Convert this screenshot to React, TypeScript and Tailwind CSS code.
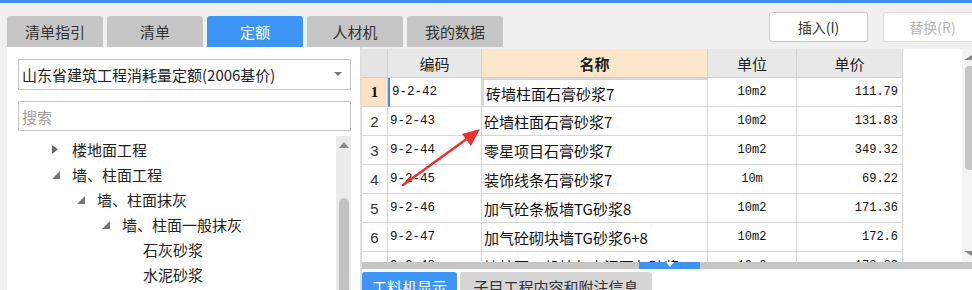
import React from 'react';

const tabs = ['清单指引', '清单', '定额', '人材机', '我的数据'];

const rows = [
  { code: '9-2-42', name: '砖墙柱面石膏砂浆7', unit: '10m2', price: '111.79' },
  { code: '9-2-43', name: '砼墙柱面石膏砂浆7', unit: '10m2', price: '131.83' },
  { code: '9-2-44', name: '零星项目石膏砂浆7', unit: '10m2', price: '349.32' },
  { code: '9-2-45', name: '装饰线条石膏砂浆7', unit: '10m', price: '69.22' },
  { code: '9-2-46', name: '加气砼条板墙TG砂浆8', unit: '10m2', price: '171.36' },
  { code: '9-2-47', name: '加气砼砌块墙TG砂浆6+8', unit: '10m2', price: '172.6' },
  { code: '9-2-48', name: '墙柱面一般抹灰水泥石灰砂浆1:1:6', unit: '10m2', price: '173.38' },
];

const tree = [
  { label: '楼地面工程', indent: 0, arrow: 'closed' },
  { label: '墙、柱面工程', indent: 0, arrow: 'open' },
  { label: '墙、柱面抹灰', indent: 1, arrow: 'open' },
  { label: '墙、柱面一般抹灰', indent: 2, arrow: 'open' },
  { label: '石灰砂浆', indent: 3, arrow: 'none' },
  { label: '水泥砂浆', indent: 3, arrow: 'none' },
];

const indentCls = ['pl-[34px]', 'pl-[59px]', 'pl-[84px]', 'pl-[109px]'];

const App: React.FC = () => {
  return (
    <div className="w-[972px] h-[290px] overflow-hidden bg-[#f0f0f0] flex flex-col relative font-['Noto_Sans_CJK_SC',sans-serif] text-[#333]">
      {/* top accent */}
      <div className="h-[3px] bg-[#3b8ff2] shrink-0" />

      {/* tab row + buttons */}
      <div className="h-[44px] flex justify-between shrink-0">
        <div className="flex items-end gap-[4px] pl-[7px]">
          {tabs.map((t) => (
            <div
              key={t}
              className={
                'w-[96px] h-[31px] rounded-t-[3px] flex items-center justify-center text-[15px] leading-none ' +
                (t === '定额' ? 'bg-[#3d96f6] text-white' : 'bg-[#c6c6c6] text-[#333]')
              }
            >
              {t}
            </div>
          ))}
        </div>
        <div className="flex gap-[15px] pt-[9px]">
          <button className="w-[99px] h-[30px] bg-white border border-[#c9c9c9] rounded-[3px] text-[14px] text-[#333] leading-none">
            插入(I)
          </button>
          <button className="w-[99px] h-[30px] bg-white border border-[#dedede] rounded-[3px] text-[14px] text-[#b5b5b5] leading-none mr-[-10px]">
            替换(R)
          </button>
        </div>
      </div>

      {/* body */}
      <div className="flex flex-1 min-h-0">
        {/* left panel */}
        <div className="ml-[7px] w-[353px] bg-white flex flex-col pt-[12px] pl-[11px] pr-[9px] shrink-0">
          <div className="h-[31px] shrink-0 border border-[#c4c4c4] flex items-center justify-between pl-[3px] pr-[8px] text-[15px] text-[#222] leading-none">
            <span>山东省建筑工程消耗量定额(2006基价)</span>
            <svg width="8" height="5" viewBox="0 0 8 5">
              <polygon points="0,0 8,0 4,4" fill="#777" />
            </svg>
          </div>
          <div className="mt-[11px] h-[30px] shrink-0 border border-[#c4c4c4] flex items-center pl-[3px] text-[15px] text-[#a0a0a0] leading-none">
            搜索
          </div>
          <div className="mt-[5px] flex flex-1 min-h-0">
            <div className="flex-1 pt-[1px]">
              {tree.map((n) => (
                <div key={n.label} className={'h-[25px] flex items-center text-[15px] text-[#222] leading-none ' + indentCls[n.indent]}>
                  <span className="w-[20px] flex items-center">
                    {n.arrow === 'closed' && (
                      <svg width="6" height="9" viewBox="0 0 6 9">
                        <polygon points="0,0 6,4.5 0,9" fill="#666" />
                      </svg>
                    )}
                    {n.arrow === 'open' && (
                      <svg width="8" height="8" viewBox="0 0 8 8">
                        <polygon points="8,0 8,8 0,8" fill="#777" />
                      </svg>
                    )}
                  </span>
                  <span className={n.arrow === 'none' ? '-ml-[4px]' : ''}>{n.label}</span>
                </div>
              ))}
            </div>
            {/* tree scrollbar */}
            <div className="w-[15px] bg-[#ececec] flex flex-col items-center pt-[6px]">
              <svg width="10" height="6" viewBox="0 0 10 6">
                <polygon points="5,0 10,6 0,6" fill="#8a8a8a" />
              </svg>
              <div className="mt-[50px] w-[10px] flex-1 bg-[#c2c2c2] rounded-t-[5px]" />
            </div>
          </div>
        </div>

        {/* splitter */}
        <div className="w-[2px] bg-[#dedede] shrink-0" />

        {/* right area */}
        <div className="flex-1 flex flex-col min-w-0 pt-[2px]">
          <div className="h-[213px] shrink-0 flex bg-white overflow-hidden">
            {/* table */}
            <div className="w-[541px] flex flex-col">
              <div className="grid grid-cols-[26px_94px_226px_89px_106px] h-[29px] shrink-0 text-[15px] leading-none">
                <div className="bg-[#e4e4e4] border-r border-b border-[#d2d2d2]" />
                <div className="bg-[#e8e8e8] border-r border-b border-[#d2d2d2] flex items-center justify-center text-[#222]">编码</div>
                <div className="bg-[#fde7cb] border-r border-b border-[#d2d2d2] flex items-center justify-center font-bold text-[#222]">名称</div>
                <div className="bg-[#e8e8e8] border-r border-b border-[#d2d2d2] flex items-center justify-center text-[#222]">单位</div>
                <div className="bg-[#e8e8e8] border-r border-b border-[#d2d2d2] flex items-center justify-center text-[#222]">单价</div>
              </div>
              {rows.map((r, i) => {
                const first = i === 0;
                return (
                  <div key={r.code} className="grid grid-cols-[26px_94px_226px_89px_106px] h-[29px] shrink-0 leading-none text-[#111]">
                    <div
                      className={
                        'border-r border-b border-[#d6d6d6] flex items-center justify-center ' +
                        (first
                          ? "bg-[#fde3c4] font-bold font-['Liberation_Serif',serif] text-[15px]"
                          : "bg-white font-['Liberation_Sans',sans-serif] text-[15px] text-[#333]")
                      }
                    >
                      {i + 1}
                    </div>
                    <div
                      className={
                        "border-r border-b border-[#d6d6d6] flex items-center pl-[2px] font-['Liberation_Mono',monospace] text-[12.5px] " +
                        (first ? 'border-l-2 border-l-[#3d8ef5] pl-0' : '')
                      }
                    >
                      {r.code}
                    </div>
                    <div
                      className={
                        'border-r border-b border-[#d6d6d6] flex items-center pl-[2px] text-[15px] whitespace-nowrap overflow-hidden ' +
                        (first ? 'border-2 border-[#6e6e6e] pl-0' : '')
                      }
                    >
                      {r.name}
                    </div>
                    <div className="border-r border-b border-[#d6d6d6] flex items-center justify-center font-['Liberation_Mono',monospace] text-[12px]">
                      {r.unit}
                    </div>
                    <div className="border-r border-b border-[#d6d6d6] flex items-center justify-end pr-[4px] font-['Liberation_Mono',monospace] text-[12px]">
                      {r.price}
                    </div>
                  </div>
                );
              })}
            </div>
            <div className="flex-1" />
            {/* vertical scrollbar */}
            <div className="w-[10px] bg-[#f3f3f3] flex flex-col items-end pt-[6px] pb-[6px]">
              <svg width="8" height="5" viewBox="0 0 8 5">
                <polygon points="8,0 8,5 0,5" fill="#888" />
              </svg>
              <div className="mt-[6px] h-[104px] w-[7px] bg-[#c6c6c6] rounded-l-[4px]" />
              <div className="flex-1" />
              <svg width="8" height="5" viewBox="0 0 8 5">
                <polygon points="0,0 8,0 8,5" fill="#888" />
              </svg>
            </div>
          </div>

          {/* horizontal scrollbar */}
          <div className="h-[7px] bg-[#c6c6c6] flex shrink-0">
            <div className="ml-[277px] w-[61px] bg-[#3d94f4] flex justify-center">
              <svg width="8" height="5" viewBox="0 0 8 5">
                <polygon points="0,0 8,0 4,5" fill="#fff" />
              </svg>
            </div>
          </div>

          {/* bottom tabs */}
          <div className="flex-1 bg-white flex gap-[3px] pt-[3px]">
            <div className="w-[95px] bg-[#3d96f6] text-white text-[15px] leading-none pt-[7px] text-center rounded-t-[3px]">
              工料机显示
            </div>
            <div className="w-[192px] bg-[#d6d6d6] text-[#333] text-[15px] leading-none pt-[7px] text-center rounded-t-[3px]">
              子目工程内容和附注信息
            </div>
          </div>
        </div>
      </div>

      {/* red annotation arrow */}
      <svg className="absolute left-0 top-0 pointer-events-none" width="972" height="290">
        <line x1="403" y1="185" x2="468" y2="138" stroke="#e8322f" strokeWidth="2.5" strokeLinecap="round" />
        <polygon points="480,129 462,134 471,146" fill="#e8322f" />
      </svg>
    </div>
  );
};

export default App;
